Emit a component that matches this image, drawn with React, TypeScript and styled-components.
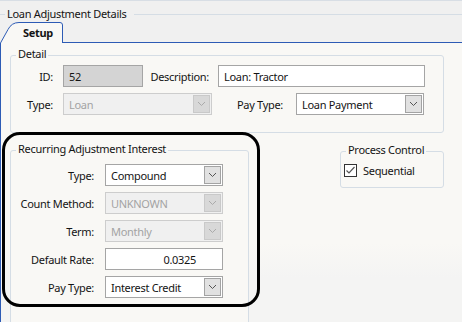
import React from 'react';
import styled, { createGlobalStyle } from 'styled-components';

const FONT = `"Noto Sans", "DejaVu Sans", sans-serif`;
const BLUE = '#2d5bb5';
const PAGE_BG = '#f9f8f5';
const GROUP_LINE = '#d5dde5';

const GlobalStyle = createGlobalStyle`
  html, body {
    margin: 0;
    padding: 0;
    background: #f0f0f0;
  }
`;

const Window = styled.div`
  position: relative;
  width: 462px;
  height: 322px;
  box-sizing: border-box;
  overflow: hidden;
  background: #f0f0f0;
  border-top: 1px solid #d8dee5;
  font-family: ${FONT};
  font-size: 11px;
  letter-spacing: -0.3px;
  color: #141414;
  display: flex;
  flex-direction: column;
`;

// outer group caption row
const HeaderRow = styled.div`
  display: flex;
  height: 21px;
  flex-shrink: 0;
`;

const HeaderLine = styled.div<{ $grow?: boolean }>`
  height: 1px;
  margin-top: 13px;
  background: ${GROUP_LINE};
  ${({ $grow }) => ($grow ? 'flex: 1;' : 'width: 5px;')}
`;

const HeaderTitle = styled.span`
  padding: 6px 8px 0 2px;
  line-height: 14px;
  white-space: nowrap;
`;

// tabs
const TabStrip = styled.div`
  display: flex;
  height: 21px;
  flex-shrink: 0;
`;

const Tab = styled.div`
  position: relative;
  width: 63px;
  height: 21px;
  display: flex;
  align-items: center;
  padding-left: 23px;
  box-sizing: border-box;
  font-weight: bold;
`;

const TabShape = styled.svg`
  position: absolute;
  left: 0;
  top: 0;
`;

const TabLabel = styled.span`
  position: relative;
`;

const TabFiller = styled.div`
  flex: 1;
  border-bottom: 1px solid ${BLUE};
`;

const TabPage = styled.div`
  flex: 1;
  border-left: 1px solid ${BLUE};
  background: linear-gradient(to bottom, ${PAGE_BG} 0px, ${PAGE_BG} 200px, #f4f4f3 235px, #f4f4f3 100%);
  padding: 12px 0 0 9px;
  display: flex;
  flex-direction: column;
`;

// group boxes
const GroupBox = styled.div<{ $w: number; $h: number }>`
  position: relative;
  width: ${({ $w }) => $w}px;
  height: ${({ $h }) => $h}px;
  box-sizing: border-box;
  flex-shrink: 0;
  border: 1px solid ${GROUP_LINE};
  border-radius: 3px;
  background: ${PAGE_BG};
`;

const Legend = styled.span`
  position: absolute;
  top: -9px;
  left: 5px;
  padding: 0 2px;
  line-height: 14px;
  background: ${PAGE_BG};
  white-space: nowrap;
`;

const GroupBody = styled.div<{ $top: number; $left?: number }>`
  display: flex;
  flex-direction: column;
  gap: 6px;
  padding-top: ${({ $top }) => $top}px;
  padding-left: ${({ $left }) => $left ?? 0}px;
`;

const FormRow = styled.div`
  display: flex;
  align-items: center;
  height: 22px;
`;

const FieldLabel = styled.span<{ $w: number; $gap: number }>`
  width: ${({ $w }) => $w}px;
  margin-right: ${({ $gap }) => $gap}px;
  flex-shrink: 0;
  text-align: right;
  white-space: nowrap;
`;

const TextField = styled.div<{ $w: number; $readOnly?: boolean; $right?: boolean }>`
  width: ${({ $w }) => $w}px;
  height: 22px;
  box-sizing: border-box;
  flex-shrink: 0;
  display: flex;
  align-items: center;
  justify-content: ${({ $right }) => ($right ? 'flex-end' : 'flex-start')};
  padding: ${({ $right }) => ($right ? '0 26px 0 0' : '0 0 0 5px')};
  border: 1px solid #a5a5a5;
  background: ${({ $readOnly }) => ($readOnly ? '#d4d4d4' : '#ffffff')};
  white-space: nowrap;
`;

const ComboBox = styled.div<{ $w: number; $disabled?: boolean }>`
  width: ${({ $w }) => $w}px;
  height: 22px;
  box-sizing: border-box;
  flex-shrink: 0;
  display: flex;
  align-items: center;
  padding: 1px;
  border: 1px solid ${({ $disabled }) => ($disabled ? '#cdcdcd' : '#a5a5a5')};
  background: ${({ $disabled }) => ($disabled ? '#f0f0f0' : '#ffffff')};
  color: ${({ $disabled }) => ($disabled ? '#a3a3a3' : '#141414')};
`;

const ComboText = styled.span`
  flex: 1;
  padding-left: 4px;
  white-space: nowrap;
  overflow: hidden;
`;

const DropButton = styled.div<{ $disabled?: boolean }>`
  width: 17px;
  height: 18px;
  box-sizing: border-box;
  display: flex;
  align-items: center;
  justify-content: center;
  border: 1px solid ${({ $disabled }) => ($disabled ? '#c9c9c9' : '#a3a3a3')};
  background: ${({ $disabled }) => ($disabled ? '#d8d8d8' : '#e1e1e1')};
`;

const BottomRow = styled.div`
  display: flex;
  justify-content: space-between;
  align-items: flex-start;
  width: 434px;
  margin-top: 17px;
`;

const ProcessBox = styled(GroupBox)`
  margin-top: 1px;
`;

const CheckRow = styled.div`
  display: flex;
  align-items: center;
  gap: 6px;
  padding: 11px 0 0 3px;
`;

const CheckBox = styled.span`
  width: 13px;
  height: 13px;
  box-sizing: border-box;
  border: 1px solid #333333;
  background: #ffffff;
  display: flex;
  align-items: center;
  justify-content: center;
`;

const Highlight = styled.div`
  position: absolute;
  left: 2px;
  top: 131px;
  width: 258px;
  height: 175px;
  box-sizing: border-box;
  border: 3px solid #000000;
  border-radius: 18px;
  pointer-events: none;
`;

const Chevron = ({ disabled }: { disabled?: boolean }) => (
  <svg width="9" height="6" viewBox="0 0 9 6">
    <path d="M1 1 L4.5 4.5 L8 1" fill="none" stroke={disabled ? '#aaaaaa' : '#555555'} strokeWidth="1" />
  </svg>
);

const Combo = ({ w, value, disabled }: { w: number; value: string; disabled?: boolean }) => (
  <ComboBox $w={w} $disabled={disabled}>
    <ComboText>{value}</ComboText>
    <DropButton $disabled={disabled}>
      <Chevron disabled={disabled} />
    </DropButton>
  </ComboBox>
);

const recurringRows = [
  { label: 'Type:', value: 'Compound' },
  { label: 'Count Method:', value: 'UNKNOWN', disabled: true },
  { label: 'Term:', value: 'Monthly', disabled: true },
  { label: 'Default Rate:', value: '0.0325', text: true },
  { label: 'Pay Type:', value: 'Interest Credit' },
];

export default function App() {
  return (
    <Window>
      <GlobalStyle />
      <HeaderRow>
        <HeaderLine />
        <HeaderTitle>Loan Adjustment Details</HeaderTitle>
        <HeaderLine $grow />
      </HeaderRow>

      <TabStrip>
        <Tab>
          <TabShape width="63" height="21" viewBox="0 0 63 21">
            <path
              d="M0.5 21 L8 7.5 Q11.5 0.5 19 0.5 L60 0.5 Q62.5 0.5 62.5 3 L62.5 21"
              fill={PAGE_BG}
              stroke={BLUE}
              strokeWidth="1"
            />
          </TabShape>
          <TabLabel>Setup</TabLabel>
        </Tab>
        <TabFiller />
      </TabStrip>

      <TabPage>
        <GroupBox $w={434} $h={78}>
          <Legend>Detail</Legend>
          <GroupBody $top={9}>
            <FormRow>
              <FieldLabel $w={42} $gap={10}>ID:</FieldLabel>
              <TextField $w={80} $readOnly>52</TextField>
              <FieldLabel $w={66} $gap={9}>Description:</FieldLabel>
              <TextField $w={207}>Loan: Tractor</TextField>
            </FormRow>
            <FormRow>
              <FieldLabel $w={42} $gap={10}>Type:</FieldLabel>
              <Combo w={149} value="Loan" disabled />
              <FieldLabel $w={71} $gap={13}>Pay Type:</FieldLabel>
              <Combo w={128} value="Loan Payment" />
            </FormRow>
          </GroupBody>
        </GroupBox>

        <BottomRow>
          <GroupBox $w={239} $h={200}>
            <Legend>Recurring Adjustment Interest</Legend>
            <GroupBody $top={13}>
              {recurringRows.map((r) => (
                <FormRow key={r.label}>
                  <FieldLabel $w={83} $gap={11}>{r.label}</FieldLabel>
                  {r.text ? (
                    <TextField $w={118} $right>{r.value}</TextField>
                  ) : (
                    <Combo w={118} value={r.value} disabled={r.disabled} />
                  )}
                </FormRow>
              ))}
            </GroupBody>
          </GroupBox>

          <ProcessBox $w={104} $h={37}>
            <Legend>Process Control</Legend>
            <CheckRow>
              <CheckBox>
                <svg width="11" height="11" viewBox="0 0 11 11">
                  <path d="M1.5 5.5 L4 8 L9.5 2" fill="none" stroke="#555555" strokeWidth="1.2" />
                </svg>
              </CheckBox>
              <span>Sequential</span>
            </CheckRow>
          </ProcessBox>
        </BottomRow>
      </TabPage>

      <Highlight />
    </Window>
  );
}
